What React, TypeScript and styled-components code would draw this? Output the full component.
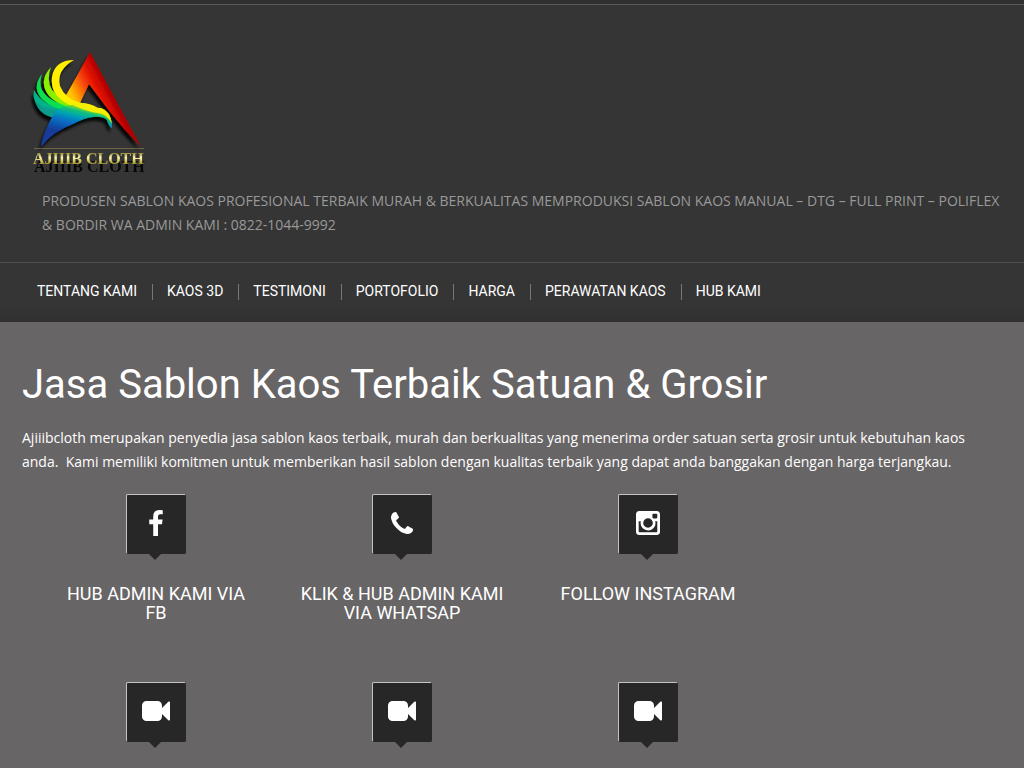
import React from 'react';
import styled, { createGlobalStyle } from 'styled-components';

const GlobalStyle = createGlobalStyle`
  * { box-sizing: border-box; }
  body {
    margin: 0;
    background: #686566;
    color: #fff;
    font-family: "Open Sans", sans-serif;
    font-size: 14px;
    line-height: 24px;
  }
`;

const Header = styled.header`
  border-top: 4px solid #303030;
  background: #353535;
`;

const Brand = styled.div`
  border-top: 1px solid #5c5c5c;
  padding: 43px 22px 25px 30px;
`;

const LogoLink = styled.a`
  display: block;
  width: 120px;
  height: 132px;
`;

const Tagline = styled.p`
  margin: 9px 0 0 12px;
  color: #999;
  text-transform: uppercase;
`;

const Nav = styled.nav`
  border-top: 1px solid #505050;
  padding: 21px 22px 22px;
  background: linear-gradient(#353535 70%, #303030);
`;

const Menu = styled.ul`
  display: flex;
  flex-wrap: wrap;
  margin: 0;
  padding: 0;
  list-style: none;
`;

const MenuItem = styled.li`
  height: 16px;
  line-height: 14px;
  padding: 0 15px 0 14px;
  border-left: 1px solid #777;
  &:first-child { border-left-color: transparent; }
`;

const MenuLink = styled.a`
  display: block;
  color: #fff;
  font-family: Roboto, sans-serif;
  text-decoration: none;
  text-transform: uppercase;
`;

const Main = styled.main`
  padding: 39px 22px 0;
`;

const Title = styled.h1`
  margin: 0;
  font: 400 40px/48px Roboto, sans-serif;
`;

const Intro = styled.p`
  margin: 17px 0 20px;
  white-space: pre-wrap;
`;

const Services = styled.ul`
  display: grid;
  grid-template-columns: repeat(3, 1fr);
  row-gap: 60px;
  max-width: 738px;
  margin: 0 0 0 11px;
  padding: 0;
  list-style: none;
`;

const Service = styled.li`
  min-height: 128px;
  padding: 0 20px;
  text-align: center;
`;

const IconTile = styled.a`
  position: relative;
  display: flex;
  align-items: center;
  justify-content: center;
  width: 60px;
  height: 60px;
  margin: 0 auto 30px;
  border: 1px solid #272727;
  border-top-color: #c4c4c4;
  border-left-color: #c4c4c4;
  border-radius: 2px;
  background: #272727;
  color: #fff;
  padding-bottom: 3px;
  &::after {
    content: "";
    position: absolute;
    top: 100%;
    left: 21px;
    border: 7px solid transparent;
    border-top-color: #272727;
    border-bottom: 0;
  }
`;

const ServiceTitle = styled.h3`
  margin: 0;
  font: 400 18px/19px Roboto, sans-serif;
  text-transform: uppercase;
  white-space: pre-line;
`;

const icons = {
  facebook: {
    w: 14, h: 26, box: '95 0 864 1664',
    d: 'M959 12v264h-157q-86 0-116 36t-30 108v189h293l-39 296h-254v759h-306v-759h-255v-296h255v-218q0-186 104-288.500t277-102.500q147 0 228 12z',
  },
  phone: {
    w: 22, h: 22, box: '0 0 1408 1408',
    d: 'M1408 1112q0 27-10 70.500t-21 68.500q-21 50-122 106-94 51-186 51-27 0-52.500-3.500t-57.500-12.500-47.500-14.500-55.500-20.500-49-18q-98-35-175-83-128-79-264.500-215.500t-215.500-264.500q-48-77-83-175-3-9-18-49t-20.500-55.500-14.500-47.500-12.500-57.500-3.500-52.500q0-92 51-186 56-101 106-122 25-11 68.500-21t70.500-10q14 0 21 3 18 6 53 76 11 19 30 54t35 63.500 31 53.500q3 4 17.500 25t21.500 35.500 7 28.500q0 20-28.500 50t-62 55-62 53-28.500 46q0 9 5 22.500t8.500 20.500 14 24 11.500 19q76 137 174 235t235 174q2 1 19 11.500t24 14 20.500 8.500 22.500 5q18 0 46-28.500t53-62 55-62 50-28.500q14 0 28.500 7t35.500 21.500 25 17.500q25 15 53.500 31t63.500 35 54 30q70 35 76 53 3 7 3 21z',
  },
  instagram: {
    w: 24, h: 24, box: '0 128 1536 1536',
    d: 'M1362 1426v-648h-135q20 63 20 131 0 126-64 232.500t-174 168.500-240 62q-197 0-337-135.500t-140-327.500q0-68 20-131h-141v648q0 26 17.500 43.500t43.500 17.500h1069q25 0 43-17.500t18-43.500zm-284-533q0-124-90.500-211.500t-218.500-87.500q-127 0-217.500 87.500t-90.500 211.500 90.500 211.500 217.500 87.500q128 0 218.500-87.500t90.500-211.500zm284-360v-165q0-28-20-48.500t-49-20.500h-174q-29 0-49 20.500t-20 48.500v165q0 29 20 49t49 20h174q29 0 49-20t20-49zm174-208v1142q0 81-58 139t-139 58h-1142q-81 0-139-58t-58-139v-1142q0-81 58-139t139-58h1142q81 0 139 58t58 139z',
  },
  video: {
    w: 28, h: 20, box: '0 256 1792 1280',
    d: 'M1792 352v1088q0 42-39 59-13 5-25 5-27 0-45-19l-403-403v166q0 119-84.500 203.500t-203.500 84.500h-704q-119 0-203.500-84.500t-84.500-203.500v-704q0-119 84.500-203.500t203.500-84.500h704q119 0 203.500 84.500t84.500 203.500v165l403-402q18-19 45-19 12 0 25 5 39 17 39 59z',
  },
};

function Icon({ name }: { name: keyof typeof icons }) {
  const { w, h, box, d } = icons[name];
  return (
    <svg width={w} height={h} viewBox={box} fill="currentColor" fillRule="evenodd" aria-hidden="true">
      <path d={d} />
    </svg>
  );
}

function Logo() {
  return (
    <svg width="120" height="132" viewBox="30 48 120 132" role="img" aria-label="Ajiiib Cloth">
      <defs>
        <linearGradient id="peak" gradientUnits="userSpaceOnUse" x1="70" y1="92" x2="121" y2="66">
          <stop offset="0" stopColor="#ffc400" />
          <stop offset="0.13" stopColor="#ff8a00" />
          <stop offset="0.3" stopColor="#f4400c" />
          <stop offset="0.46" stopColor="#e01000" />
          <stop offset="0.62" stopColor="#b00000" />
          <stop offset="0.8" stopColor="#c40000" />
          <stop offset="1" stopColor="#a80000" />
        </linearGradient>
        <linearGradient id="bird" gradientUnits="userSpaceOnUse" x1="84" y1="104" x2="76" y2="136">
          <stop offset="0" stopColor="#e8f000" />
          <stop offset="0.12" stopColor="#8fdc20" />
          <stop offset="0.25" stopColor="#10c07c" />
          <stop offset="0.42" stopColor="#00a0b4" />
          <stop offset="0.62" stopColor="#0870c4" />
          <stop offset="1" stopColor="#143a98" />
        </linearGradient>
        <linearGradient id="gold" x1="0" y1="0" x2="0" y2="1">
          <stop offset="0.15" stopColor="#8f8228" />
          <stop offset="0.45" stopColor="#fff6b0" />
          <stop offset="0.65" stopColor="#d2c458" />
          <stop offset="0.9" stopColor="#8c7c20" />
        </linearGradient>
        <filter id="shade" x="-20%" y="-20%" width="140%" height="140%">
          <feDropShadow dx="-2" dy="4" stdDeviation="1.500" floodColor="#000" floodOpacity="0.9" />
        </filter>
        <filter id="textShade" x="-5%" y="-20%" width="110%" height="200%">
          <feDropShadow dx="1" dy="8" stdDeviation="0.700" floodColor="#000" floodOpacity="0.85" />
        </filter>
      </defs>
      <g filter="url(#shade)">
        <path d="M90 52L141 147Q124 130 110 112L89 84L80 103L65 97Q76 78 90 52Z" fill="url(#peak)" />
        <path d="M34 90Q31 108 52 111L58 114L66 108Q43 107 34 90Z" fill="#00b48a" />
        <path d="M35 101Q39 115 55 118L64 109Q45 111 35 101Z" fill="#0a9c8c" />
        <path d="M42 74Q31 88 43 100Q52 108 66 110L72 105Q50 104 42 90Q39 84 42 74Z" fill="#10e050" />
        <path d="M51 67Q39 80 47 93Q54 104 74 108L78 103Q61 101 52 90Q46 80 51 67Z" fill="#8af000" />
        <path d="M74 60Q55 60 52 77Q50 94 66 103Q76 109 92 109L98 108Q90 103 81 103Q65 99 60 86Q56 70 74 60Z" fill="#fff000" />
        <path d="M56 110Q70 103 83 104Q92 110 101 109Q112 112 112 128Q109 127 107 120Q103 116 93 117Q84 118 73 124Q52 132 41 147Q42 137 49 123Z" fill="url(#bird)" />
        <path d="M66 101Q75 103 83 103Q91 108 101 108Q110 111 112 124Q107 114 98 113Q82 111 66 101Z" fill="#f4ee00" />
      </g>
      <path d="M34 148.500H144" stroke="#85794a" strokeWidth="0.700" />
      <text
        x="33" y="164"
        fontFamily="Liberation Serif, serif" fontSize="16" fontWeight="700"
        fill="url(#gold)" filter="url(#textShade)"
      >
        AJIIIB CLOTH
      </text>
    </svg>
  );
}

const menu = ['Tentang Kami', 'Kaos 3D', 'Testimoni', 'Portofolio', 'Harga', 'Perawatan Kaos', 'Hub Kami'];

const services: { icon: keyof typeof icons; title?: string }[] = [
  { icon: 'facebook', title: 'Hub Admin Kami via\nFB' },
  { icon: 'phone', title: 'Klik & Hub Admin Kami\nvia Whatsap' },
  { icon: 'instagram', title: 'Follow Instagram' },
  { icon: 'video' },
  { icon: 'video' },
  { icon: 'video' },
];

export default function App() {
  return (
    <>
      <GlobalStyle />
      <Header>
        <Brand>
          <LogoLink href="#"><Logo /></LogoLink>
          <Tagline>
            Produsen sablon kaos profesional terbaik murah &amp; berkualitas memproduksi sablon kaos manual – DTG – full print – poliflex &amp; bordir WA admin kami : 0822-1044-9992
          </Tagline>
        </Brand>
        <Nav>
          <Menu>
            {menu.map((label) => (
              <MenuItem key={label}><MenuLink href="#">{label}</MenuLink></MenuItem>
            ))}
          </Menu>
        </Nav>
      </Header>
      <Main>
        <Title>Jasa Sablon Kaos Terbaik Satuan &amp; Grosir</Title>
        <Intro>{'Ajiiibcloth merupakan penyedia jasa sablon kaos terbaik, murah dan berkualitas yang menerima order satuan serta grosir untuk kebutuhan kaos anda.  Kami memiliki komitmen untuk memberikan hasil sablon dengan kualitas terbaik yang dapat anda banggakan dengan harga terjangkau.'}</Intro>
        <Services>
          {services.map(({ icon, title }, i) => (
            <Service key={i}>
              <IconTile href="#" aria-label={title ?? 'Video'}><Icon name={icon} /></IconTile>
              {title && <ServiceTitle>{title}</ServiceTitle>}
            </Service>
          ))}
        </Services>
      </Main>
    </>
  );
}
